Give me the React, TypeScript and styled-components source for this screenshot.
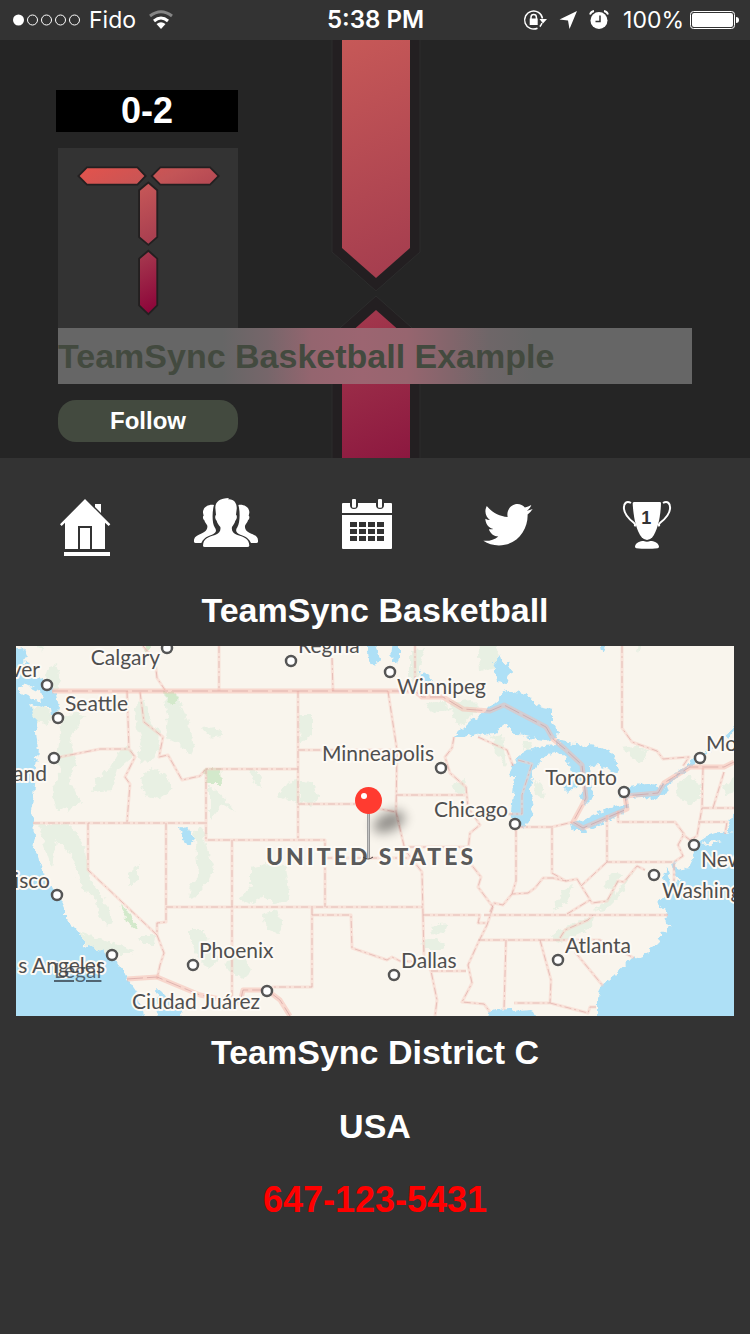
import React from "react";
import styled, { createGlobalStyle } from "styled-components";

const rounded = `"Arial Rounded MT Bold", "Liberation Sans", sans-serif`;

const GlobalStyle = createGlobalStyle`
  *, *::before, *::after { box-sizing: border-box; }
  body { margin: 0; background: #333333; }
`;

const Page = styled.div`
  min-height: 100vh;
  background: #333333;
  color: #ffffff;
  font-family: ${rounded};
`;

/* ---------- status bar ---------- */

const StatusBar = styled.header`
  display: grid;
  grid-template-columns: 1fr auto 1fr;
  align-items: center;
  height: 40px;
  padding: 0 11px 0 12px;
  font-family: Inter, sans-serif;
  font-size: 23px;
  line-height: 40px;
`;

const StatusGroup = styled.div<{ $end?: boolean }>`
  display: flex;
  align-items: center;
  justify-content: ${(p) => (p.$end ? "flex-end" : "flex-start")};
  gap: ${(p) => (p.$end ? "6px" : "8px")};
`;

const Clock = styled.time`
  font-size: 24px;
  font-weight: 600;
`;

/* ---------- hero ---------- */

const Hero = styled.section`
  position: relative;
  padding: 50px 58px 16px 56px;
  background: #252525;
  isolation: isolate;
`;

const HeroArt = styled.svg`
  position: absolute;
  inset: 0;
  z-index: -1;
  width: 100%;
  height: 100%;
`;

const Record = styled.div`
  width: 182px;
  margin-bottom: 16px;
  background: #000000;
  font-size: 36px;
  font-weight: 700;
  line-height: 42px;
  text-align: center;
`;

const Profile = styled.div`
  padding-left: 2px;
`;

const Avatar = styled.svg`
  display: block;
  width: 180px;
  height: 180px;
  background: #333333;
`;

const TeamName = styled.h1`
  margin: 0 0 16px;
  background: linear-gradient(
    90deg,
    #666666 26%,
    #76666a 33%,
    #94656f 40%,
    #9c6571 48%,
    #97656f 55%,
    #82656b 62%,
    #6e6668 68%,
    #666666 75%
  );
  color: #434a3f;
  font-size: 34px;
  font-weight: 700;
  line-height: 56px;
  white-space: nowrap;
`;

const FollowButton = styled.button`
  display: block;
  width: 180px;
  height: 42px;
  padding: 0;
  border: 0;
  border-radius: 18px;
  background: #434a3f;
  color: #ffffff;
  font-family: ${rounded};
  font-size: 24px;
  font-weight: 700;
  line-height: 42px;
`;

/* ---------- tabs ---------- */

const Tabs = styled.nav`
  display: grid;
  grid-template-columns: repeat(5, 1fr);
  padding: 37px 31px 28px 14px;
`;

const Tab = styled.a`
  display: flex;
  justify-content: center;
  color: #ffffff;
`;

const TabIcon = styled.svg`
  width: 65px;
  height: 65px;
  fill: currentColor;
`;

/* ---------- body ---------- */

const Venue = styled.main`
  padding: 0 16px 40px;
`;

const Heading = styled.h2`
  margin: 0;
  font-size: 34px;
  font-weight: 700;
  line-height: 44px;
  text-align: center;
`;

const MapFrame = styled.div`
  position: relative;
  margin: 14px 0;
`;

const MapDrawing = styled.svg`
  display: block;
  width: 100%;
  height: auto;
  background: #f9f5ed;
  font-family: "Avenir Next", Lato, sans-serif;
`;

const LegalLink = styled.a`
  position: absolute;
  left: 38px;
  bottom: 34px;
  color: rgba(50, 60, 70, 0.75);
  font-family: "Avenir Next", Lato, sans-serif;
  font-size: 21px;
  line-height: 24px;
`;

const Details = styled.address`
  display: flex;
  flex-direction: column;
  align-items: center;
  gap: 30px;
  font-size: 34px;
  font-style: normal;
  font-weight: 700;
  line-height: 44px;
`;

const Phone = styled.a`
  color: #ff0000;
  font-size: 36px;
  text-decoration: none;
`;

/* ---------- map data ---------- */

const water = [
  "M0 652 L24 648 L27 655 L22 662 L30 664 L26 668 L34 676 L45 682 L52 686 L56 694 L58 706 L56 714 L51 716 L50 708 L44 708 L29 704 L33 712 L37 722 L36 732 L38 750 L36 766 L34 785 L33 800 L31 812 L34 820 L35 836 L33 848 L39 857 L41 868 L48 880 L52 890 L60 897 L65 908 L65 918 L75 928 L83 938 L83 946 L95 948 L106 954 L117 962 L123 970 L128 980 L135 990 L141 1003 L148 1030 L0 1030 Z",
  "M156 989 L162 992 L172 1003 L180 1006 L186 1030 L157 1030 L158 1003 Z",
  "M454 737 L470 721 L485 711 L494 702 L500 697 L506 690 L517 692 L530 697 L538 707 L552 710 L552 722 L558 731 L556 738 L545 740 L530 738 L518 735 L512 732 L507 723 L498 730 L484 737 L476 733 L465 737 Z",
  "M499 664 L508 663 L511 673 L506 683 L497 681 L495 673 Z",
  "M508 776 L514 764 L522 752 L535 748 L545 746 L556 745 L560 752 L548 755 L540 762 L532 775 L530 790 L534 806 L530 820 L522 828 L514 826 L511 812 L513 795 L515 776 Z",
  "M556 741 L575 744 L600 746 L612 752 L619 770 L617 773 L606 768 L597 764 L590 766 L591 778 L593 797 L586 804 L581 798 L583 785 L574 788 L568 793 L563 788 L574 780 L570 768 L566 757 L556 750 Z",
  "M572 822 L585 819 L600 811 L615 807 L628 803 L629 808 L610 820 L597 826 L585 831 L574 831 Z",
  "M618 797 L630 787 L645 784 L658 786 L664 782 L667 792 L655 800 L640 797 L624 799 Z",
  "M366 636 H374 L379 661 L375 667 L369 660 Z",
  "M393 636 H400 L400 657 L396 664 L391 660 Z",
  "M420 673 L424 671 L432 681 L422 683 Z",
  "M494 662 L500 655 L503 664 L499 672 Z",
  "M180 828 L186 826 L188 830 L193 834 L195 840 L188 846 L183 838 Z",
  "M750 832 L718 833 L704 838 L695 845 L693 858 L688 868 L681 873 L676 862 L672 860 L674 873 L680 880 L672 884 L666 866 L664 878 L670 890 L664 896 L656 903 L664 909 L668 916 L664 922 L671 927 L662 932 L658 943 L642 956 L627 962 L615 975 L603 985 L597 997 L597 1030 H750 Z",
  "M750 812 H733 L731 820 L727 832 L750 834 Z",
  "M488 1012 L496 1009 L510 1008 L518 1011 L530 1010 L542 1016 V1030 H486 Z",
  "M600 636 L606 646 L602 652 Z",
];

const islands = [
  "M18 688 L26 684 L40 691 L42 701 L34 700 L24 695 Z",
  "M700 845 L712 840 L722 841 L712 844 Z",
];

const woods = [
  "M62 718 L72 712 L86 716 L78 726 L70 740 L76 760 L70 780 L80 800 L70 812 L56 808 L52 790 L60 776 L58 750 Z",
  "M48 668 L56 664 L60 680 L56 692 L46 684 Z",
  "M28 706 L46 708 L52 716 L46 724 L36 722 Z",
  "M134 708 L144 700 L152 724 L160 732 L158 752 L146 764 L138 756 L142 740 L136 728 Z",
  "M164 692 L176 694 L186 716 L194 746 L190 754 L178 742 L166 738 L168 716 Z",
  "M140 778 L152 768 L166 776 L172 790 L160 798 L144 794 Z",
  "M120 750 L128 744 L134 756 L118 770 L112 790 L92 792 L98 778 L110 768 Z",
  "M202 728 L216 726 L222 736 L210 738 Z",
  "M210 786 L222 796 L236 812 L222 804 L210 820 Z",
  "M248 770 L260 774 L262 788 L256 784 Z",
  "M277 796 L288 782 L298 780 L300 806 L288 800 Z",
  "M298 714 L312 714 L312 736 L300 744 Z",
  "M300 780 L312 784 L318 798 L310 806 L300 802 Z",
  "M36 824 L70 824 L84 846 L90 880 L104 898 L112 920 L108 926 L98 914 L94 898 L82 888 L74 860 L66 848 L56 840 L52 868 L46 850 Z",
  "M130 872 L138 866 L138 880 L130 886 Z",
  "M194 830 L204 826 L206 846 L214 866 L208 882 L196 896 L188 898 L190 886 L198 876 Z",
  "M250 868 L266 864 L286 866 L290 900 L276 904 L264 896 L250 904 L240 900 L250 886 Z",
  "M262 914 L276 910 L282 922 L280 934 L268 930 Z",
  "M188 930 L204 930 L208 944 L220 960 L208 968 L196 956 Z",
  "M226 960 L240 952 L252 970 L244 978 L228 972 Z",
  "M80 932 L96 938 L134 950 L132 954 L104 954 L84 944 Z",
  "M140 936 L156 936 L154 944 L142 944 Z",
  "M420 942 L436 938 L446 944 L440 950 L424 950 Z",
  "M430 926 L448 924 L444 934 L432 932 Z",
  "M552 936 L560 930 L576 922 L594 916 L592 926 L580 934 L558 944 Z",
  "M594 912 L606 900 L614 888 L622 874 L610 872 L604 888 L616 892 L634 870 L620 896 L606 910 Z",
  "M552 912 L562 890 L574 886 L566 904 Z",
  "M676 784 L688 776 L700 784 L700 798 L690 804 L678 798 Z",
  "M622 748 L636 746 L650 752 L640 764 L630 756 Z",
  "M490 736 L502 734 L506 766 L498 756 Z",
  "M478 636 L500 636 L496 668 L480 672 Z",
  "M410 652 L424 648 L416 690 L410 682 Z",
  "M424 704 L440 700 L452 710 L432 712 Z",
  "M450 702 L472 700 L480 708 L460 726 L452 716 Z",
  "M534 780 L542 784 L544 798 L536 796 Z",
  "M524 742 L532 742 L530 750 L522 748 Z",
  "M452 786 L464 780 L466 794 L454 792 Z",
  "M722 786 L750 770 V790 L726 794 Z",
  "M630 636 H644 L638 652 Z",
  "M34 636 L44 646 L42 652 Z",
];

const parks = [
  "M205 768 L220 768 L221 784 L206 784 Z",
  "M120 904 L132 914 L138 930 L126 922 Z",
  "M164 692 L174 692 L178 704 L170 704 Z",
  "M140 636 L150 646 L148 656 Z",
];

const stateLines =
  "M127 691 L129 749 L135 757 L125 777 L130 784 L127 822 M55 758 L100 749 H129 " +
  "M140 692 L144 722 L163 737 L159 757 L168 755 L182 780 L200 776 L205 770 M33 823 H205 " +
  "M298 769 H206 V840 H325 V907 M298 691 V840 M298 750 H396 M298 804 H355 L396 812 " +
  "M388 691 L397 750 L396 812 L405 850 L422 872 L423 915 M396 795 H465 " +
  "M454 737 L452 748 L445 757 L450 773 L466 787 L468 807 L480 825 L470 833 L468 850 L470 863 L481 877 L478 887 L493 907 " +
  "M408 847 H468 M325 858 H412 M166 907 H423 M166 823 V922 L157 923 V935 L164 953 L160 965 L157 979 " +
  "M88 823 V870 L157 935 M232 840 V1000 M312 908 V987 H272 M312 915 H351 L352 948 L387 960 L392 957 L400 961 L424 962 " +
  "M423 915 H480 L478 923 H486 M423 915 L424 960 L431 971 L437 1000 L435 1016 M431 971 H466 " +
  "M493 907 L487 925 L478 943 L468 965 L472 983 L462 1002 L484 1004 L490 1012 " +
  "M484 915 H668 M478 940 H600 L634 958 M506 940 L504 1010 M540 940 L551 980 L550 1003 H514 M550 1003 L588 1013 L590 1007 H596 " +
  "M575 952 L603 986 M560 938 L565 930 L588 920 L593 915 " +
  "M490 912 L494 903 L503 905 L512 894 L528 893 L535 888 L543 878 H553 L566 881 L577 879 L592 903 L607 901 L618 881 L624 882 L637 866 L645 870 " +
  "M516 830 V881 L512 894 M552 828 V873 L566 881 M516 827 H552 L573 822 M607 815 V862 H674 M607 862 L581 886 M567 914 L590 900 " +
  "M618 811 V822 H675 L684 834 L678 845 L683 856 L674 862 V885 M703 768 L702 808 L697 836 L690 840 L682 834 M702 808 H734 M698 822 H727 L725 834 M724 772 L713 808 " +
  "M622 646 V728 L632 742 L657 751 L663 759 L689 757 L683 766 M219 646 V691 M143 646 L155 660 L157 678 L165 690 " +
  "M332 658 L333 691 M415 646 V692 M478 737 L507 750 L513 766 M518 760 L532 764 L522 795 V814 H508";

const nationalLine =
  "M52 691 H415 L422 697 H443 L463 709 L490 711 L504 705 L546 727 L553 739 L565 749 L582 765 L586 798 L573 822 L583 828 L627 809 L625 796 L658 793 L664 783 L690 767 H724 L734 762 " +
  "M127 979 L157 977 L200 995 L240 1003 L243 990 H267 L280 1000 L290 1016";

type Anchor = "start" | "end";
const labels: { text: string; x: number; y: number; anchor?: Anchor }[] = [
  { text: "Calgary", x: 160, y: 665, anchor: "end" },
  { text: "Regina", x: 298, y: 653 },
  { text: "Winnipeg", x: 397, y: 694 },
  { text: "ver", x: 40, y: 677, anchor: "end" },
  { text: "Seattle", x: 65, y: 711 },
  { text: "and", x: 47, y: 781, anchor: "end" },
  { text: "Minneapolis", x: 434, y: 761, anchor: "end" },
  { text: "Chicago", x: 508, y: 817, anchor: "end" },
  { text: "Toronto", x: 617, y: 785, anchor: "end" },
  { text: "Mo", x: 706, y: 751 },
  { text: "New", x: 701, y: 867 },
  { text: "Washing", x: 662, y: 898 },
  { text: "isco", x: 50, y: 888, anchor: "end" },
  { text: "s Angeles", x: 105, y: 973, anchor: "end" },
  { text: "Phoenix", x: 199, y: 958 },
  { text: "Ciudad Juárez", x: 260, y: 1009, anchor: "end" },
  { text: "Dallas", x: 401, y: 968 },
  { text: "Atlanta", x: 565, y: 953 },
];

const cities = [
  [167, 648], [291, 661], [390, 672], [47, 685], [58, 718], [54, 758], [441, 768],
  [515, 824], [624, 792], [700, 758], [694, 845], [654, 875], [57, 895], [112, 955],
  [193, 965], [267, 991], [394, 975], [558, 960],
];

function RegionMap() {
  return (
    <MapDrawing viewBox="16 646 718 370" role="img" aria-label="Map of the United States">
      <defs>
        <filter id="coast" x="-5%" y="-5%" width="110%" height="110%">
          <feTurbulence type="fractalNoise" baseFrequency="0.16" numOctaves="3" seed="4" />
          <feDisplacementMap in="SourceGraphic" scale="8" xChannelSelector="R" yChannelSelector="G" />
        </filter>
        <filter id="pinShadow" x="-60%" y="-120%" width="220%" height="340%">
          <feGaussianBlur stdDeviation="6" />
        </filter>
        <linearGradient id="stem" x1="0" x2="1" y1="0" y2="0">
          <stop offset="0" stopColor="#8a8a8a" />
          <stop offset="0.5" stopColor="#c4c4c4" />
          <stop offset="1" stopColor="#808080" />
        </linearGradient>
      </defs>
      <g filter="url(#coast)">
        <g fill="#e8f0e3">{woods.map((d) => <path key={d} d={d} />)}</g>
        <g fill="#d3e9cb">{parks.map((d) => <path key={d} d={d} />)}</g>
        <g fill="#aee0f6">{water.map((d) => <path key={d} d={d} />)}</g>
        <g fill="#f9f5ed">{islands.map((d) => <path key={d} d={d} />)}</g>
        <path d="M660 790 L690 764 L716 744 L750 718" fill="none" stroke="#aee0f6" strokeWidth="3" />
      </g>
      <g fill="none" strokeLinejoin="round">
        <path d={stateLines} stroke="#f9cfc6" strokeOpacity="0.5" strokeWidth="3" />
        <path d={stateLines} stroke="#d9a09c" strokeOpacity="0.55" strokeWidth="1" strokeDasharray="7 3 2 3" />
        <path d={nationalLine} stroke="#f7b9ae" strokeOpacity="0.5" strokeWidth="5" />
        <path d={nationalLine} stroke="#c98f92" strokeOpacity="0.5" strokeWidth="1" strokeDasharray="16 4" />
      </g>
      <g fill="#ffffff" stroke="#555555" strokeWidth="2.500">
        {cities.map(([x, y]) => <circle key={`${x}-${y}`} cx={x} cy={y} r="5" />)}
      </g>
      <g fill="#4f4f4f" stroke="#fdfaf5" strokeWidth="4" strokeLinejoin="round" paintOrder="stroke" fontSize="21">
        {labels.map((l) => (
          <text key={l.text} x={l.x} y={l.y} textAnchor={l.anchor ?? "start"}>{l.text}</text>
        ))}
        <text x="371" y="865" textAnchor="middle" fontSize="23" fontWeight="900" letterSpacing="3" fill="#5a5a5a">
          UNITED STATES
        </text>
      </g>
      <ellipse cx="389" cy="822" rx="17" ry="9" fill="#000000" opacity="0.42" transform="rotate(-25 389 822)" filter="url(#pinShadow)" />
      <path d="M363 857 Q368 861 373 857" fill="none" stroke="#444444" strokeWidth="1" />
      <rect x="367" y="812" width="3" height="46" fill="url(#stem)" />
      <circle cx="368.500" cy="800.500" r="13.500" fill="#ff3b30" />
      <circle cx="364" cy="796" r="3" fill="#ffffff" />
    </MapDrawing>
  );
}

function HeroBackdrop() {
  return (
    <HeroArt viewBox="0 40 750 418" preserveAspectRatio="xMidYMid slice" aria-hidden="true">
      <defs>
        <linearGradient id="beam" gradientUnits="userSpaceOnUse" x1="290" y1="50" x2="470" y2="450">
          <stop offset="0" stopColor="#c85a58" />
          <stop offset="0.550" stopColor="#a63e4f" />
          <stop offset="1" stopColor="#8a143e" />
        </linearGradient>
      </defs>
      <g fill="#231f21" stroke="#2d2d2d" strokeWidth="1">
        <path d="M332 30 V252 L376 291 L420 252 V30 Z" />
        <path d="M332 470 V335 L376 296 L420 335 V470 Z" />
      </g>
      <path d="M342 30 V248 L376 278 L410 248 V30 Z" fill="url(#beam)" />
      <path d="M342 470 V340 L376 310 L410 340 V470 Z" fill="url(#beam)" />
    </HeroArt>
  );
}

function TeamLogo() {
  return (
    <Avatar viewBox="174 444 540 540" role="img" aria-label="TeamSync logo">
      <defs>
        <linearGradient id="logo" gradientUnits="userSpaceOnUse" x1="237" y1="503" x2="470" y2="943">
          <stop offset="0" stopColor="#e4534c" />
          <stop offset="0.300" stopColor="#c35557" />
          <stop offset="0.600" stopColor="#a83e50" />
          <stop offset="1" stopColor="#8a0038" />
        </linearGradient>
      </defs>
      <g fill="url(#logo)" stroke="#231f20" strokeWidth="11" paintOrder="stroke">
        <path d="M239 528 L262 505 H411 L433 528 L411 551 H262 Z" />
        <path d="M459 528 L482 505 H629 L652 528 L629 551 H482 Z" />
        <path d="M445 551 L469 572 V710 L445 731 L420 710 V572 Z" />
        <path d="M445 756 L469 777 V915 L445 939 L420 915 V777 Z" />
      </g>
    </Avatar>
  );
}

const HomeIcon = () => (
  <TabIcon viewBox="36 45 195 195" aria-hidden="true">
    <path d="M165 72 H183 V99 L165 81 Z" />
    <path d="M135 57 L211 133 L206 138 L195 128 V207 H156 V138 H114 V207 H75 V128 L65 138 L60 133 Z" />
    <path d="M120 144 H150 V207 H120 Z M72 216 H210 V228 H72 Z" />
  </TabIcon>
);

const TeamIcon = () => (
  <TabIcon viewBox="459 45 195 195" aria-hidden="true">
    <path d="M522 75 C503 72 488 84 489 98 L491 107 C487 109 489 118 493 121 C495 128 500 133 502 137 C503 149 497 155 483 161 C468 167 461 172 462 186 Q463 189 467 189 H484 C489 177 499 169 516 164 C529 159 531 151 524 142 C516 129 516 95 522 75 Z" />
    <path d="M595 75 C614 72 629 84 628 98 L626 107 C630 109 628 118 624 121 C622 128 617 133 615 137 C614 149 620 155 634 161 C649 167 655 172 654 186 Q653 189 649 189 H633 C628 177 618 169 601 164 C588 159 585 151 592 142 C600 129 601 95 595 75 Z" />
    <path d="M567 54 L564 58 C583 56 592 72 590 88 L588 104 C593 107 590 119 586 122 C584 130 579 136 576 141 C574 151 578 160 592 165 C613 171 627 176 628 197 Q627 201 622 201 H494 Q489 201 489 197 C490 176 504 171 525 165 C539 160 543 151 541 141 C537 136 532 130 530 122 C525 118 524 108 528 104 L526 84 C525 66 540 54 567 54 Z" />
  </TabIcon>
);

const CalendarIcon = () => (
  <TabIcon viewBox="882 45 195 195" aria-hidden="true">
    <path d="M909 69 H930 V76 Q930 87 942 87 Q954 87 954 76 V69 H1008 V76 Q1008 87 1020 87 Q1032 87 1032 76 V69 H1053 Q1056 69 1056 72 V99 H906 V72 Q906 69 909 69 Z" />
    <rect x="936" y="57" width="12" height="26" rx="3" />
    <rect x="1014" y="57" width="12" height="26" rx="3" />
    <path d="M906 105 H1056 V204 Q1056 207 1053 207 H909 Q906 207 906 204 Z" />
    <g fill="#333333">
      {[126, 147, 168].map((y) =>
        [930, 957, 984, 1011].map((x) => <rect key={`${x}-${y}`} x={x} y={y} width="21" height="15" />)
      )}
    </g>
  </TabIcon>
);

const BirdIcon = () => (
  <TabIcon viewBox="225 45 195 195" aria-hidden="true">
    <path
      transform="translate(250 58) scale(0.289 0.298)"
      d="M459.37 151.716c.325 4.548.325 9.097.325 13.645 0 138.72-105.583 298.558-298.558 298.558-59.452 0-114.68-17.219-161.137-47.106 8.447.974 16.568 1.299 25.34 1.299 49.055 0 94.213-16.568 130.274-44.832-46.132-.975-84.792-31.188-98.112-72.772 6.498.974 12.995 1.624 19.818 1.624 9.421 0 18.843-1.3 27.614-3.573-48.081-9.747-84.143-51.98-84.143-102.985v-1.299c13.969 7.797 30.214 12.67 47.431 13.319-28.264-18.843-46.781-51.005-46.781-87.391 0-19.492 5.197-37.36 14.294-52.954 51.655 63.675 129.3 105.258 216.365 109.807-1.624-7.797-2.599-15.918-2.599-24.04 0-57.828 46.782-104.934 104.934-104.934 30.213 0 57.502 12.67 76.67 33.137 23.715-4.548 46.456-13.32 66.599-25.34-7.798 24.366-24.366 44.833-46.132 57.827 21.117-2.273 41.584-8.122 60.426-16.243-14.292 20.791-32.161 39.308-52.628 54.253z"
    />
  </TabIcon>
);

const TrophyIcon = () => (
  <TabIcon viewBox="648 45 195 195" aria-hidden="true">
    <path d="M698 69 Q699 66 703 66 H779 Q783 66 783 69 C782 112 772 152 757 172 Q750 180 741 180 Q732 180 725 172 C709 152 700 112 698 69 Z" />
    <path
      d="M693 69 C680 61 670 70 672 87 C674 107 691 120 702 129 Q707 133 704 139 M789 69 C802 61 812 70 810 87 C808 107 791 120 780 129 Q775 133 778 139"
      fill="none"
      stroke="currentColor"
      strokeWidth="6"
    />
    <path d="M705 199 C708 187 720 183 731 183 Q741 188 751 183 C762 183 774 187 777 199 Q778 204 773 205 Q741 208 709 205 Q704 204 705 199 Z" />
    <text x="739" y="131" textAnchor="middle" fontSize="54" fontWeight="700" fill="#333333">1</text>
  </TabIcon>
);

const tabs = [
  { label: "Home", Icon: HomeIcon },
  { label: "Team", Icon: TeamIcon },
  { label: "Schedule", Icon: CalendarIcon },
  { label: "Twitter", Icon: BirdIcon },
  { label: "Standings", Icon: TrophyIcon },
];

export default function App() {
  return (
    <Page>
      <GlobalStyle />
      <StatusBar>
        <StatusGroup>
          <svg width="69" height="14" viewBox="0 0 69 14" role="img" aria-label="Signal strength">
            <circle cx="6.500" cy="7" r="5.500" fill="#ffffff" />
            <g fill="none" stroke="#ffffff">
              <circle cx="20.500" cy="7" r="5" />
              <circle cx="34.500" cy="7" r="5" />
              <circle cx="48.500" cy="7" r="5" />
              <circle cx="62.500" cy="7" r="5" />
            </g>
          </svg>
          <span>Fido</span>
          <svg width="30" height="20" viewBox="-5 0 30 20" role="img" aria-label="Wi-Fi">
            <g fill="none" strokeWidth="3">
              <path d="M1 6 Q12 -2.500 23 6" stroke="#858585" />
              <path d="M5 11 Q12 5 19 11" stroke="#ffffff" />
            </g>
            <path d="M7.500 14 Q12 10.500 16.500 14 L12 19 Z" fill="#ffffff" />
          </svg>
        </StatusGroup>
        <Clock>5:38 PM</Clock>
        <StatusGroup $end>
          <svg width="94" height="22" viewBox="0 0 94 22" role="img" aria-label="Rotation lock, location, alarm">
            <g fill="none" stroke="#ffffff" strokeWidth="1.500">
              <path d="M19.500 9.500 A9 9 0 1 0 14.500 19.200" />
              <path d="M16.800 17.600 A9 9 0 0 0 19 14" />
              <path d="M8 10 V8.200 A2.700 2.700 0 0 1 13.400 8.200 V10" />
            </g>
            <path d="M16.500 10 H24 L20 14.500 Z M6.700 9.600 H14.700 V16 H6.700 Z" fill="#ffffff" />
            <path d="M54 2 L46.500 20 L45 11.500 L36.500 10.500 Z" fill="#ffffff" />
            <circle cx="76" cy="11.500" r="8.500" fill="#ffffff" />
            <path d="M67 5.500 Q68 2.500 71 2 M85 5.500 Q84 2.500 81 2" fill="none" stroke="#ffffff" strokeWidth="1.800" />
            <path d="M77 6.500 V12.500 H72.500" fill="none" stroke="#333333" strokeWidth="1.500" />
          </svg>
          <span>100%</span>
          <svg width="49" height="20" viewBox="0 0 49 20" role="img" aria-label="Battery full">
            <rect x="0.500" y="1.500" width="44" height="17" rx="3" fill="none" stroke="#ffffff" />
            <rect x="2" y="3" width="41" height="14" rx="2" fill="#ffffff" />
            <path d="M46 7 Q49 7 49 10 Q49 13 46 13 Z" fill="#ffffff" />
          </svg>
        </StatusGroup>
      </StatusBar>

      <Hero>
        <HeroBackdrop />
        <Record>0-2</Record>
        <Profile>
          <TeamLogo />
          <TeamName>TeamSync Basketball Example</TeamName>
          <FollowButton type="button">Follow</FollowButton>
        </Profile>
      </Hero>

      <Tabs aria-label="Team sections">
        {tabs.map(({ label, Icon }) => (
          <Tab key={label} href={`#${label.toLowerCase()}`} aria-label={label}>
            <Icon />
          </Tab>
        ))}
      </Tabs>

      <Venue>
        <Heading>TeamSync Basketball</Heading>
        <MapFrame>
          <RegionMap />
          <LegalLink href="#legal">Legal</LegalLink>
        </MapFrame>
        <Details>
          <span>TeamSync District C</span>
          <span>USA</span>
          <Phone href="tel:647-123-5431">647-123-5431</Phone>
        </Details>
      </Venue>
    </Page>
  );
}
